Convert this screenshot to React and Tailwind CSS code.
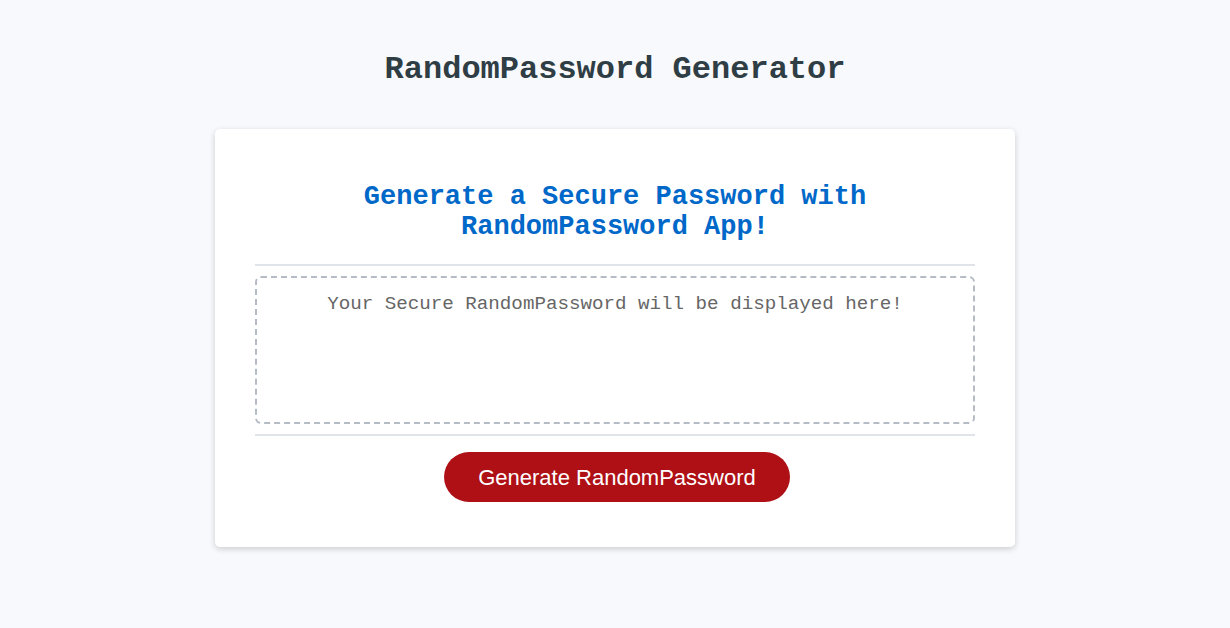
const App = () => {
  return (
    <div className="min-h-screen bg-[#f8f9fd] pt-[52px] font-['Liberation_Mono',monospace]">
      <h1 className="text-center text-[32px] leading-[36px] font-bold text-[#2f3d44]">
        RandomPassword Generator
      </h1>

      <div className="mx-auto mt-[41px] w-[800px] rounded-[5px] bg-white px-10 pt-[53px] pb-[45px] shadow-[0_2px_6px_rgba(0,0,0,0.18)]">
        <h2 className="text-center text-[27px] leading-[30px] font-bold text-[#0068c8]">
          Generate a Secure Password with
          <br />
          RandomPassword App!
        </h2>

        <div className="mt-[22px] border-t-2 border-[#e0e3e7]" />

        <textarea
          readOnly
          placeholder="Your Secure RandomPassword will be displayed here!"
          className="mt-[10px] block h-[148px] w-full resize-none rounded-[6px] border-2 border-dashed border-[#b6bcc6] px-4 pt-[15px] text-center text-[19.2px] leading-[22px] outline-none placeholder:text-[#666666] font-['Liberation_Mono',monospace]"
        />

        <div className="mt-[10px] border-t-2 border-[#e0e3e7]" />

        <div className="mt-[16px] flex justify-center pl-[4px]">
          <button className="h-[50px] w-[346px] rounded-full bg-[#ae1016] text-[22px] text-white font-['Liberation_Sans',Arial,sans-serif]">
            Generate RandomPassword
          </button>
        </div>
      </div>
    </div>
  );
};

export default App;
